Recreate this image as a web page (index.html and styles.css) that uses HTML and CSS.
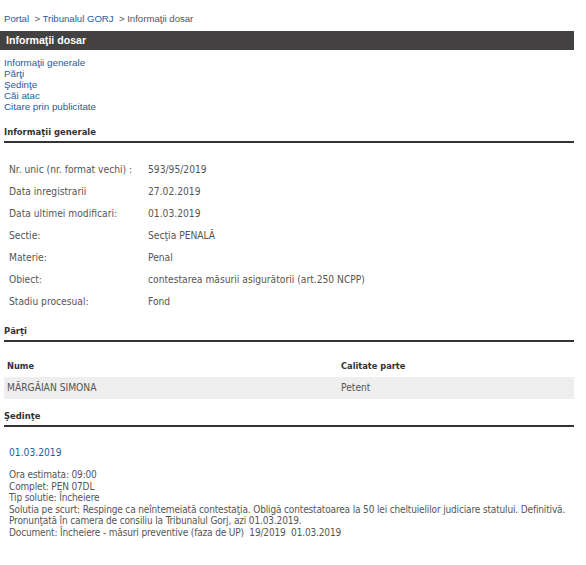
FILE: index.html
```html
<!DOCTYPE html>
<html lang="ro">
<head>
<meta charset="utf-8">
<title>Informaţii dosar</title>
<link rel="stylesheet" href="styles.css">
</head>
<body>
<div class="page">
  <div class="crumbs"><a href="#">Portal</a> &nbsp;&gt; <a href="#">Tribunalul GORJ</a> &nbsp;&gt; Informaţii dosar</div>
  <div class="titlebar">Informaţii dosar</div>
  <ul class="toc">
    <li><a href="#">Informaţii generale</a></li>
    <li><a href="#">Părţi</a></li>
    <li><a href="#">Şedinţe</a></li>
    <li><a href="#">Căi atac</a></li>
    <li><a href="#">Citare prin publicitate</a></li>
  </ul>

  <h2 class="section">Informaţii generale</h2>
  <div class="info">
    <div class="row"><span class="lbl">Nr. unic (nr. format vechi) :</span><span>593/95/2019</span></div>
    <div class="row"><span class="lbl">Data inregistrarii</span><span>27.02.2019</span></div>
    <div class="row"><span class="lbl">Data ultimei modificari:</span><span>01.03.2019</span></div>
    <div class="row"><span class="lbl">Sectie:</span><span>Secţia PENALĂ</span></div>
    <div class="row"><span class="lbl">Materie:</span><span>Penal</span></div>
    <div class="row"><span class="lbl">Obiect:</span><span>contestarea măsurii asigurătorii (art.250 NCPP)</span></div>
    <div class="row"><span class="lbl">Stadiu procesual:</span><span>Fond</span></div>
  </div>

  <h2 class="section">Părţi</h2>
  <div class="parti">
    <div class="prow head"><span>Nume</span><span>Calitate parte</span></div>
    <div class="prow alt"><span>MĂRGĂIAN SIMONA</span><span>Petent</span></div>
  </div>

  <h2 class="section">Şedinţe</h2>
  <div class="sedinta">
    <div class="date">01.03.2019</div>
    <div class="details">
      Ora estimata: 09:00<br>
      Complet: PEN 07DL<br>
      Tip solutie: Încheiere<br>
      Solutia pe scurt: Respinge ca neîntemeiată contestaţia. Obligă contestatoarea la 50 lei cheltuielilor judiciare statului. Definitivă.<br>
      Pronunţată în camera de consiliu la Tribunalul Gorj, azi 01.03.2019.<br>
      Document: Încheiere - măsuri preventive (faza de UP)&nbsp; 19/2019&nbsp; 01.03.2019
    </div>
  </div>
</div>
</body>
</html>
```

FILE: styles.css
```css
html, body {
  margin: 0;
  padding: 0;
  background: #fff;
}
.page {
  width: 574px;
  font-family: "DejaVu Sans Condensed", "DejaVu Sans", sans-serif;
  font-size: 10.2px;
  color: #555;
}
a {
  color: #1f5c9e;
  text-decoration: none;
}
.crumbs {
  font-family: "Liberation Sans", Arial, sans-serif;
  font-size: 9.6px;
  color: #555;
  padding: 12px 0 0 4px;
  height: 19px;
  line-height: 13px;
}
.titlebar {
  background: #434142;
  color: #fff;
  font-family: "Liberation Sans", Arial, sans-serif;
  font-weight: bold;
  font-size: 10.6px;
  height: 19px;
  line-height: 19px;
  padding-left: 6px;
}
.toc {
  list-style: none;
  margin: 0;
  padding: 7px 0 0 4px;
  font-family: "Liberation Sans", Arial, sans-serif;
  font-size: 9.8px;
  line-height: 11px;
}
.section {
  margin: 13px 0 0 4px;
  font-family: "DejaVu Sans Condensed", "DejaVu Sans", sans-serif;
  font-size: 9.4px;
  font-weight: bold;
  color: #333;
  border-bottom: 2px solid #333;
  padding-bottom: 3px;
  line-height: 13px;
}
.info {
  padding: 16px 0 0 9px;
}
.info + .section {
  margin-top: 11px;
}
.row {
  display: flex;
  height: 22px;
  line-height: 22px;
}
.lbl {
  width: 139px;
}
.parti {
  margin: 13px 0 0 4px;
}
.prow {
  display: flex;
  height: 22px;
  line-height: 22px;
  padding-left: 3px;
}
.prow span:first-child {
  width: 334px;
}
.prow.head {
  font-weight: bold;
  font-size: 9.2px;
  color: #333;
}
.prow.alt {
  background: #eee;
}
.parti + .section {
  margin-top: 10px;
}
.sedinta {
  padding: 19px 0 0 9px;
}
.date {
  color: #1f5c9e;
  line-height: 14px;
  margin-bottom: 9px;
}
.details {
  font-size: 10px;
  line-height: 11.6px;
  white-space: nowrap;
  letter-spacing: -0.15px;
}
```
